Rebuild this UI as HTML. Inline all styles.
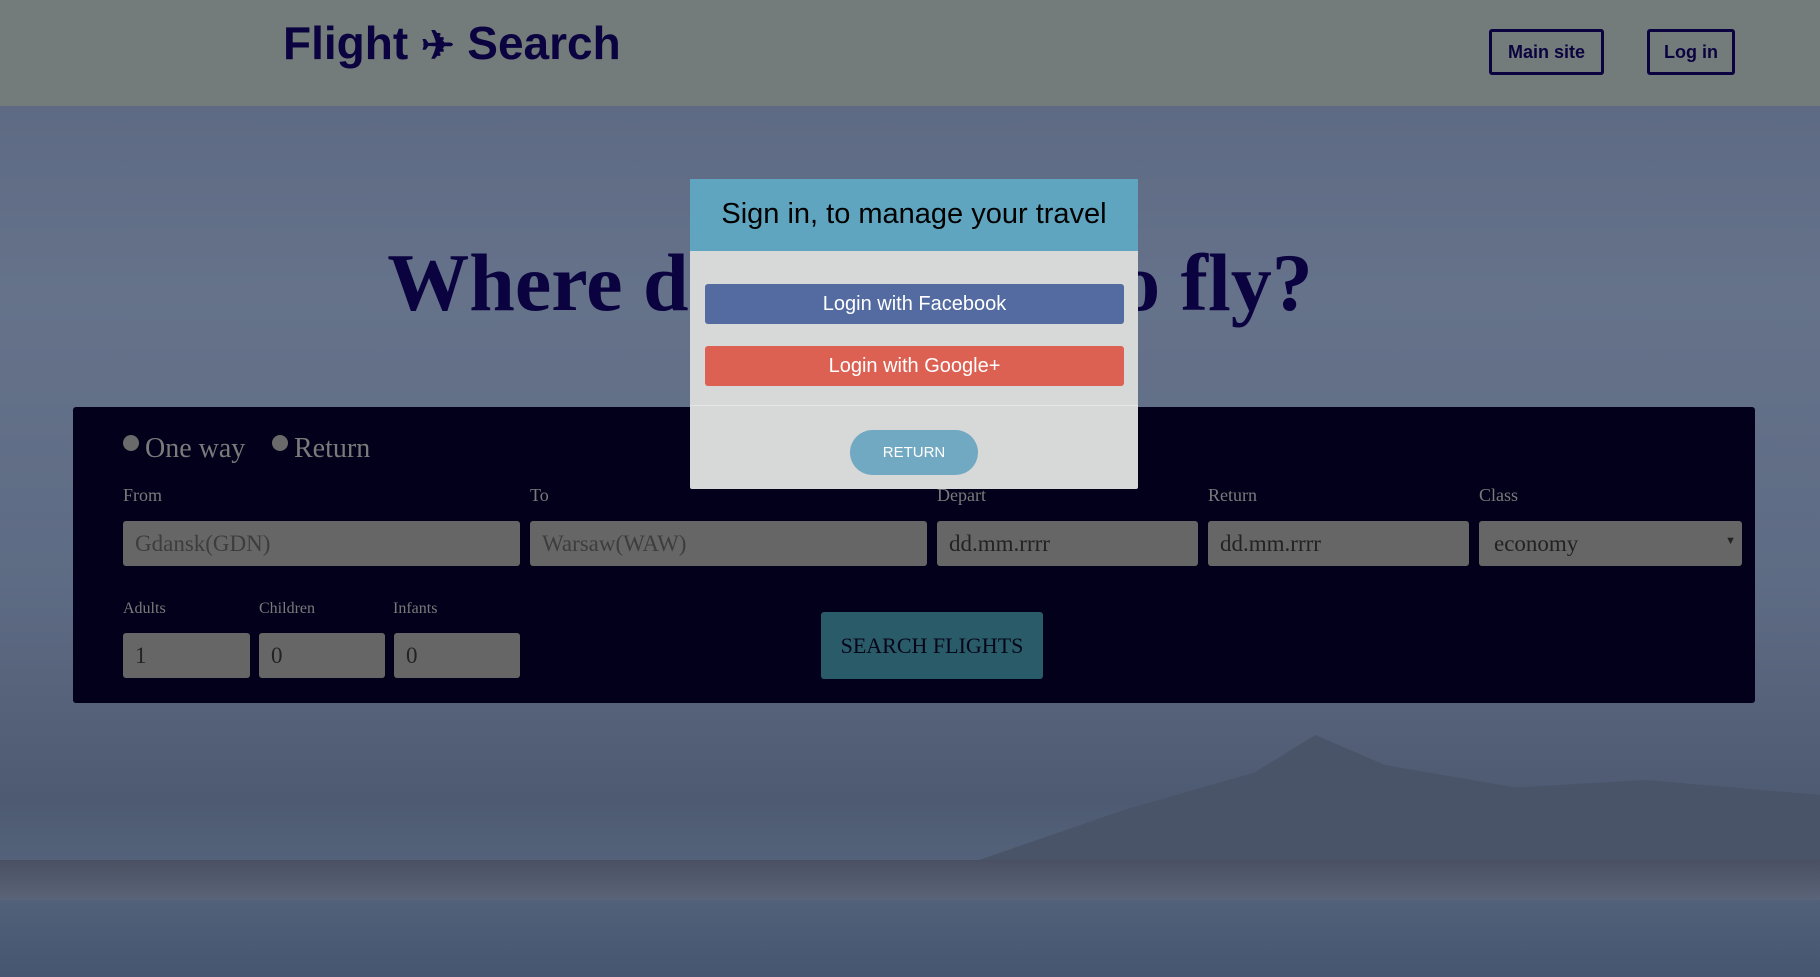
<!DOCTYPE html>
<html><head><meta charset="utf-8"><style>
*{box-sizing:border-box;margin:0;padding:0}
body{width:1820px;height:977px;overflow:hidden;position:relative;font-family:"Liberation Serif",serif;
background:linear-gradient(180deg,#5a6680 0%,#65728a 30%,#5e6b84 60%,#56627a 72%,#4d5a72 82%,#55647c 90%,#465570 100%);}
.mtn{position:absolute;left:950px;top:720px;width:870px;height:150px;background:#4a5468;clip-path:polygon(0 100%,20% 60%,35% 35%,42% 10%,50% 30%,65% 45%,80% 40%,100% 50%,100% 100%)}
.shore{position:absolute;left:0;top:860px;width:1820px;height:40px;background:linear-gradient(180deg,#4a5062,#5a6478)}
.hdr{position:absolute;left:0;top:0;width:1820px;height:106px;background:#737b7b}
.logo{position:absolute;left:283px;top:16px;font:bold 46px "Liberation Sans",sans-serif;color:#0b0340}
.nb{position:absolute;top:29px;height:46px;border:3px solid #0b0340;border-radius:3px;font:bold 18px "Liberation Sans",sans-serif;color:#0b0340;display:flex;align-items:center;justify-content:center}
h1{position:absolute;left:0;width:1820px;text-align:center;top:236px;font:bold 82px "Liberation Serif",serif;color:#0b0340;padding-right:120px}
.panel{position:absolute;left:73px;top:407px;width:1682px;height:296px;background:#02001a;border-radius:3px}
.lbl{position:absolute;color:#7a7a7a;font-size:18px}
.inp{position:absolute;height:45px;background:#666;border-radius:3px;font-size:23px;color:#3d3d3d;padding:10px 12px}
.dark{color:#222}
.radio{position:absolute;top:433px;font-size:28px;color:#7a7a7a}
.radio i{display:inline-block;width:16px;height:16px;border-radius:50%;background:#6a6a6a;vertical-align:6px;margin-right:6px}
.srch{position:absolute;left:821px;top:612px;width:222px;height:67px;background:#2a5b68;border-radius:3px;color:#06061a;font-size:22px;display:flex;align-items:center;justify-content:center}
.modal{position:absolute;left:690px;top:179px;width:448px;height:310px;background:#d7d8d8;border-radius:2px;font-family:"Liberation Sans",sans-serif}
.mh{height:72px;background:#60a5c0;font-size:29px;color:#000;text-align:center;padding-top:19px}
.mb{position:absolute;left:15px;width:419px;height:40px;border-radius:3px;color:#fff;font-size:20px;display:flex;align-items:center;justify-content:center}
.ret{position:absolute;left:160px;top:251px;width:128px;height:45px;border-radius:23px;background:#72a9c2;color:#fff;font-size:15px;display:flex;align-items:center;justify-content:center}
</style></head><body>
<div class="mtn"></div><div class="shore"></div>
<div class="hdr"></div>
<div class="logo">Flight <span style="font-size:40px">✈</span> Search</div>
<div class="nb" style="left:1489px;width:115px">Main site</div>
<div class="nb" style="left:1647px;width:88px">Log in</div>
<h1>Where do you want to fly?</h1>
<div class="panel"></div>
<div class="radio" style="left:123px"><i></i>One way</div>
<div class="radio" style="left:272px"><i></i>Return</div>
<div class="lbl" style="left:123px;top:485px">From</div>
<div class="lbl" style="left:530px;top:485px">To</div>
<div class="lbl" style="left:937px;top:485px">Depart</div>
<div class="lbl" style="left:1208px;top:485px">Return</div>
<div class="lbl" style="left:1479px;top:485px">Class</div>
<div class="inp" style="left:123px;top:521px;width:397px">Gdansk(GDN)</div>
<div class="inp" style="left:530px;top:521px;width:397px">Warsaw(WAW)</div>
<div class="inp dark" style="left:937px;top:521px;width:261px">dd.mm.rrrr</div>
<div class="inp dark" style="left:1208px;top:521px;width:261px">dd.mm.rrrr</div>
<div class="inp dark" style="left:1479px;top:521px;width:263px;padding-left:15px">economy<span style="position:absolute;right:6px;top:14px;font-size:11px">▼</span></div>
<div class="lbl" style="left:123px;top:600px;font-size:16px">Adults</div>
<div class="lbl" style="left:259px;top:600px;font-size:16px">Children</div>
<div class="lbl" style="left:393px;top:600px;font-size:16px">Infants</div>
<div class="inp dark" style="left:123px;top:633px;width:127px">1</div>
<div class="inp dark" style="left:259px;top:633px;width:126px">0</div>
<div class="inp dark" style="left:394px;top:633px;width:126px">0</div>
<div class="srch">SEARCH FLIGHTS</div>
<div class="modal">
<div class="mh">Sign in, to manage your travel</div>
<div class="mb" style="top:105px;background:#536ba1">Login with Facebook</div>
<div class="mb" style="top:167px;background:#dd6153">Login with Google+</div>
<div style="position:absolute;left:0;top:226px;width:448px;height:1px;background:#e6e6e6"></div>
<div class="ret">RETURN</div>
</div>
</body></html>
